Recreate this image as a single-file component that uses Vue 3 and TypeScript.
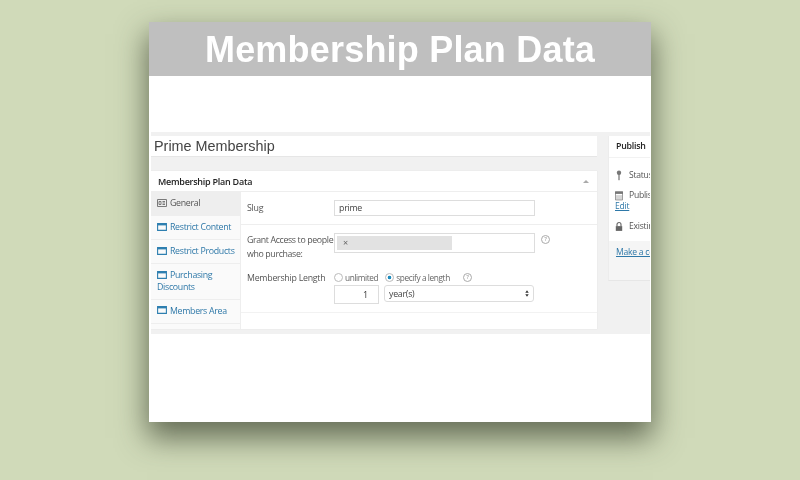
<template>
  <div class="page">
    <div class="card">
      <div class="banner"><span>Membership Plan Data</span></div>
      <div class="shot">
        <div class="main-col">
          <div class="title-input">Prime Membership</div>
          <div class="metabox">
            <div class="metabox-head">
              <span>Membership Plan Data</span>
              <span class="caret"></span>
            </div>
            <div class="metabox-body">
              <ul class="tabs">
                <li v-for="tab in tabs" :key="tab.label" :class="['tab', { active: tab.active }]">
                  <svg v-if="tab.active" class="tab-icon" viewBox="0 0 10 8">
                    <path d="M.5.5h9v7h-9zM2 2.5h2v3H2zM5.5 2.5H8M5.5 4H8M5.5 5.5H8" fill="none" stroke="#7a7a7a" stroke-width="1" />
                  </svg>
                  <svg v-else class="tab-icon" viewBox="0 0 10 8">
                    <path d="M.6.6h8.8v6.8H.6z" fill="none" stroke="#2e7fb0" stroke-width="1.1" />
                    <path d="M.6 1.6h8.8" stroke="#2e7fb0" stroke-width="1.6" />
                  </svg>
                  {{ tab.label }}
                </li>
              </ul>
              <div class="panel">
                <div class="row slug-row">
                  <label>Slug</label>
                  <div class="field">prime</div>
                </div>
                <div class="group">
                  <div class="row grant-row">
                    <label>Grant Access to people who purchase:</label>
                    <div class="field tall"><span class="chip">×</span></div>
                    <span class="help">?</span>
                  </div>
                  <div class="row length-row">
                    <label>Membership Length</label>
                    <div class="length-fields">
                      <div class="radios">
                        <span class="radio"></span><span>unlimited</span>
                        <span class="radio on"></span><span>specify a length</span>
                        <span class="help">?</span>
                      </div>
                      <div class="length-inputs">
                        <div class="num">1</div>
                        <div class="select">
                          <span>year(s)</span>
                          <svg viewBox="0 0 6 10" class="arrows"><path d="M3 0l2.6 4H.4zM3 10L.4 6h5.2z" fill="#333" /></svg>
                        </div>
                      </div>
                    </div>
                  </div>
                </div>
              </div>
            </div>
          </div>
        </div>
        <div class="publish">
          <div class="publish-head">Publish</div>
          <div class="publish-body">
            <div class="pub-line status">
              <svg class="pub-icon" viewBox="0 0 10 14"><circle cx="5" cy="3.5" r="2.8" fill="#777" /><rect x="4.2" y="5" width="1.6" height="8" fill="#777" /></svg>
              <span>Status</span>
            </div>
            <div class="pub-line date">
              <svg class="pub-icon" viewBox="0 0 10 12"><path d="M.5 1.5h9v10h-9z" fill="none" stroke="#777" /><path d="M0 1h10v3H0z" fill="#777" /><path d="M2.5 5.5v5M5 5.5v5M7.5 5.5v5" stroke="#999" /></svg>
              <span>Publis</span>
            </div>
            <a class="edit">Edit</a>
            <div class="pub-line lock">
              <svg class="pub-icon" viewBox="0 0 10 12"><path d="M2.5 5.5V3.5a2.5 2.5 0 0 1 5 0v2" fill="none" stroke="#666" stroke-width="1.4" /><rect x="1" y="5.5" width="8" height="6" fill="#666" /></svg>
              <span>Existin</span>
            </div>
          </div>
          <div class="publish-foot"><a>Make a co</a></div>
        </div>
      </div>
    </div>
  </div>
</template>

<script setup lang="ts">
interface Tab {
  label: string
  active?: boolean
}

const tabs: Tab[] = [
  { label: 'General', active: true },
  { label: 'Restrict Content' },
  { label: 'Restrict Products' },
  { label: 'Purchasing Discounts' },
  { label: 'Members Area' }
]
</script>

<style>
html, body { margin: 0; background: #d0dab9; }
</style>

<style scoped>
.page { width: 800px; height: 480px; background: #d0dab9; padding: 22px 0 0 149px; box-sizing: border-box; overflow: hidden; font-family: "Open Sans", "Liberation Sans", sans-serif; }
.card { width: 502px; height: 400px; background: #fff; box-shadow: 0 14px 28px 2px rgba(50, 58, 40, 0.68); overflow: hidden; }
.banner { height: 54px; background: #bfbfbf; color: #fff; font: bold 36px/55px "Liberation Sans", sans-serif; text-align: center; letter-spacing: 0.2px; }
.banner span { display: block; filter: blur(0.4px); }
.shot { margin: 56px 1px 0 2px; height: 202px; background: #f1f1f1; display: flex; gap: 11px; padding-top: 4px; box-sizing: border-box; overflow: hidden; filter: blur(0.35px); }
.main-col { width: 446px; flex: none; }
.title-input { height: 21px; background: #fff; border-bottom: 1px solid #e6e6e6; box-sizing: border-box; padding-left: 3px; font: 14.4px/21px "Liberation Sans", sans-serif; color: #444; }
.metabox { margin-top: 14px; height: 158px; background: #fff; box-shadow: 0 0 1px #ddd; }
.metabox-head { height: 21px; padding: 0 7px; display: flex; justify-content: space-between; align-items: center; font-size: 9px; letter-spacing: -0.25px; font-weight: 600; color: #222; border-bottom: 1px solid #eee; box-sizing: border-box; }
.caret { width: 0; height: 0; margin-right: 1px; border: 3px solid transparent; border-top: 0; border-bottom: 3px solid #aaa; }
.metabox-body { display: flex; height: 137px; }
.tabs { list-style: none; margin: 0; padding: 0; width: 90px; flex: none; background: #fafafa; border-right: 1px solid #eee; box-sizing: border-box; }
.tab { padding: 6px 2px 5.5px 6px; font-size: 8.8px; letter-spacing: -0.3px; line-height: 11.5px; color: #2e78a8; border-bottom: 1px solid #eee; }
.tab.active { background: #eee; color: #555; border-bottom: 0; height: 24px; box-sizing: border-box; }
.tab-icon { width: 10px; height: 8px; margin-right: 1px; vertical-align: -0.5px; }
.panel { flex: 1; min-width: 0; font-size: 8.8px; letter-spacing: -0.25px; color: #555; }
.row { display: flex; padding-left: 6px; }
.row label { width: 87px; flex: none; line-height: 14px; }
.row.grant-row label { width: 92px; margin-right: -5px; letter-spacing: -0.36px; }
.slug-row { height: 33px; align-items: center; border-bottom: 1px solid #eee; box-sizing: border-box; }
.group { height: 88px; border-bottom: 1px solid #f2f2f2; box-sizing: border-box; }
.field { width: 201px; height: 16px; border: 1px solid #ddd; padding-left: 4px; box-sizing: border-box; font-size: 8.8px; line-height: 14px; color: #444; }
.grant-row { padding-top: 8px; height: 46px; box-sizing: border-box; }
.field.tall { height: 20px; padding: 2px; }
.chip { display: block; width: 115px; height: 14px; background: #e2e2e2; color: #666; padding-left: 6px; font-size: 9px; line-height: 14px; box-sizing: border-box; }
.help { width: 7px; height: 7px; margin-left: 6px; border: 1px solid #aaa; border-radius: 50%; color: #888; font-size: 6px; line-height: 7px; text-align: center; flex: none; }
.grant-row .help { margin-top: 2px; }
.length-row { height: 41px; }
.radios { display: flex; align-items: center; height: 12px; margin-bottom: 2px; gap: 2px; color: #666; font-size: 8.3px; letter-spacing: -0.4px; }
.radio { width: 9px; height: 9px; border: 1px solid #bbb; border-radius: 50%; background: #fff; flex: none; box-sizing: border-box; }
.radio.on { margin-left: 5px; background: radial-gradient(circle, #1e8cbe 0 1.6px, #fff 2.1px); }
.radios .help { margin-left: 11px; }
.length-inputs { display: flex; gap: 5px; }
.num { width: 45px; height: 19px; border: 1px solid #ddd; box-sizing: border-box; text-align: right; padding-right: 10px; font-size: 9px; line-height: 17px; color: #333; }
.select { width: 150px; height: 17px; border: 1px solid #ddd; border-radius: 3px; box-sizing: border-box; display: flex; justify-content: space-between; align-items: center; padding: 0 4px; font-size: 8.8px; color: #444; }
.arrows { width: 4px; height: 7px; }
.publish { width: 60px; flex: none; height: 145px; background: #fff; border-bottom: 1px solid #e6e6e6; border-left: 1px solid #ececec; box-sizing: border-box; font-size: 8.6px; letter-spacing: -0.25px; color: #555; white-space: nowrap; }
.publish-head { height: 22px; padding-left: 7px; line-height: 21px; font-size: 8.8px; font-weight: 600; color: #222; border-bottom: 1px solid #f2f2f2; box-sizing: border-box; }
.publish-body { height: 83px; padding: 11px 0 0 6px; box-sizing: border-box; background: #fff; }
.pub-line { display: flex; align-items: center; gap: 6px; height: 12px; width: 37px; overflow: hidden; }
.pub-icon { width: 8px; height: 11px; flex: none; }
.pub-line.date { margin-top: 8px; }
.edit { display: block; color: #2e78a8; text-decoration: underline; line-height: 11px; }
.pub-line.lock { margin-top: 8px; }
.publish-foot { background: #f5f5f5; height: 39px; padding: 5px 0 0 7px; color: #2e78a8; text-decoration: underline; box-sizing: border-box; }
</style>
